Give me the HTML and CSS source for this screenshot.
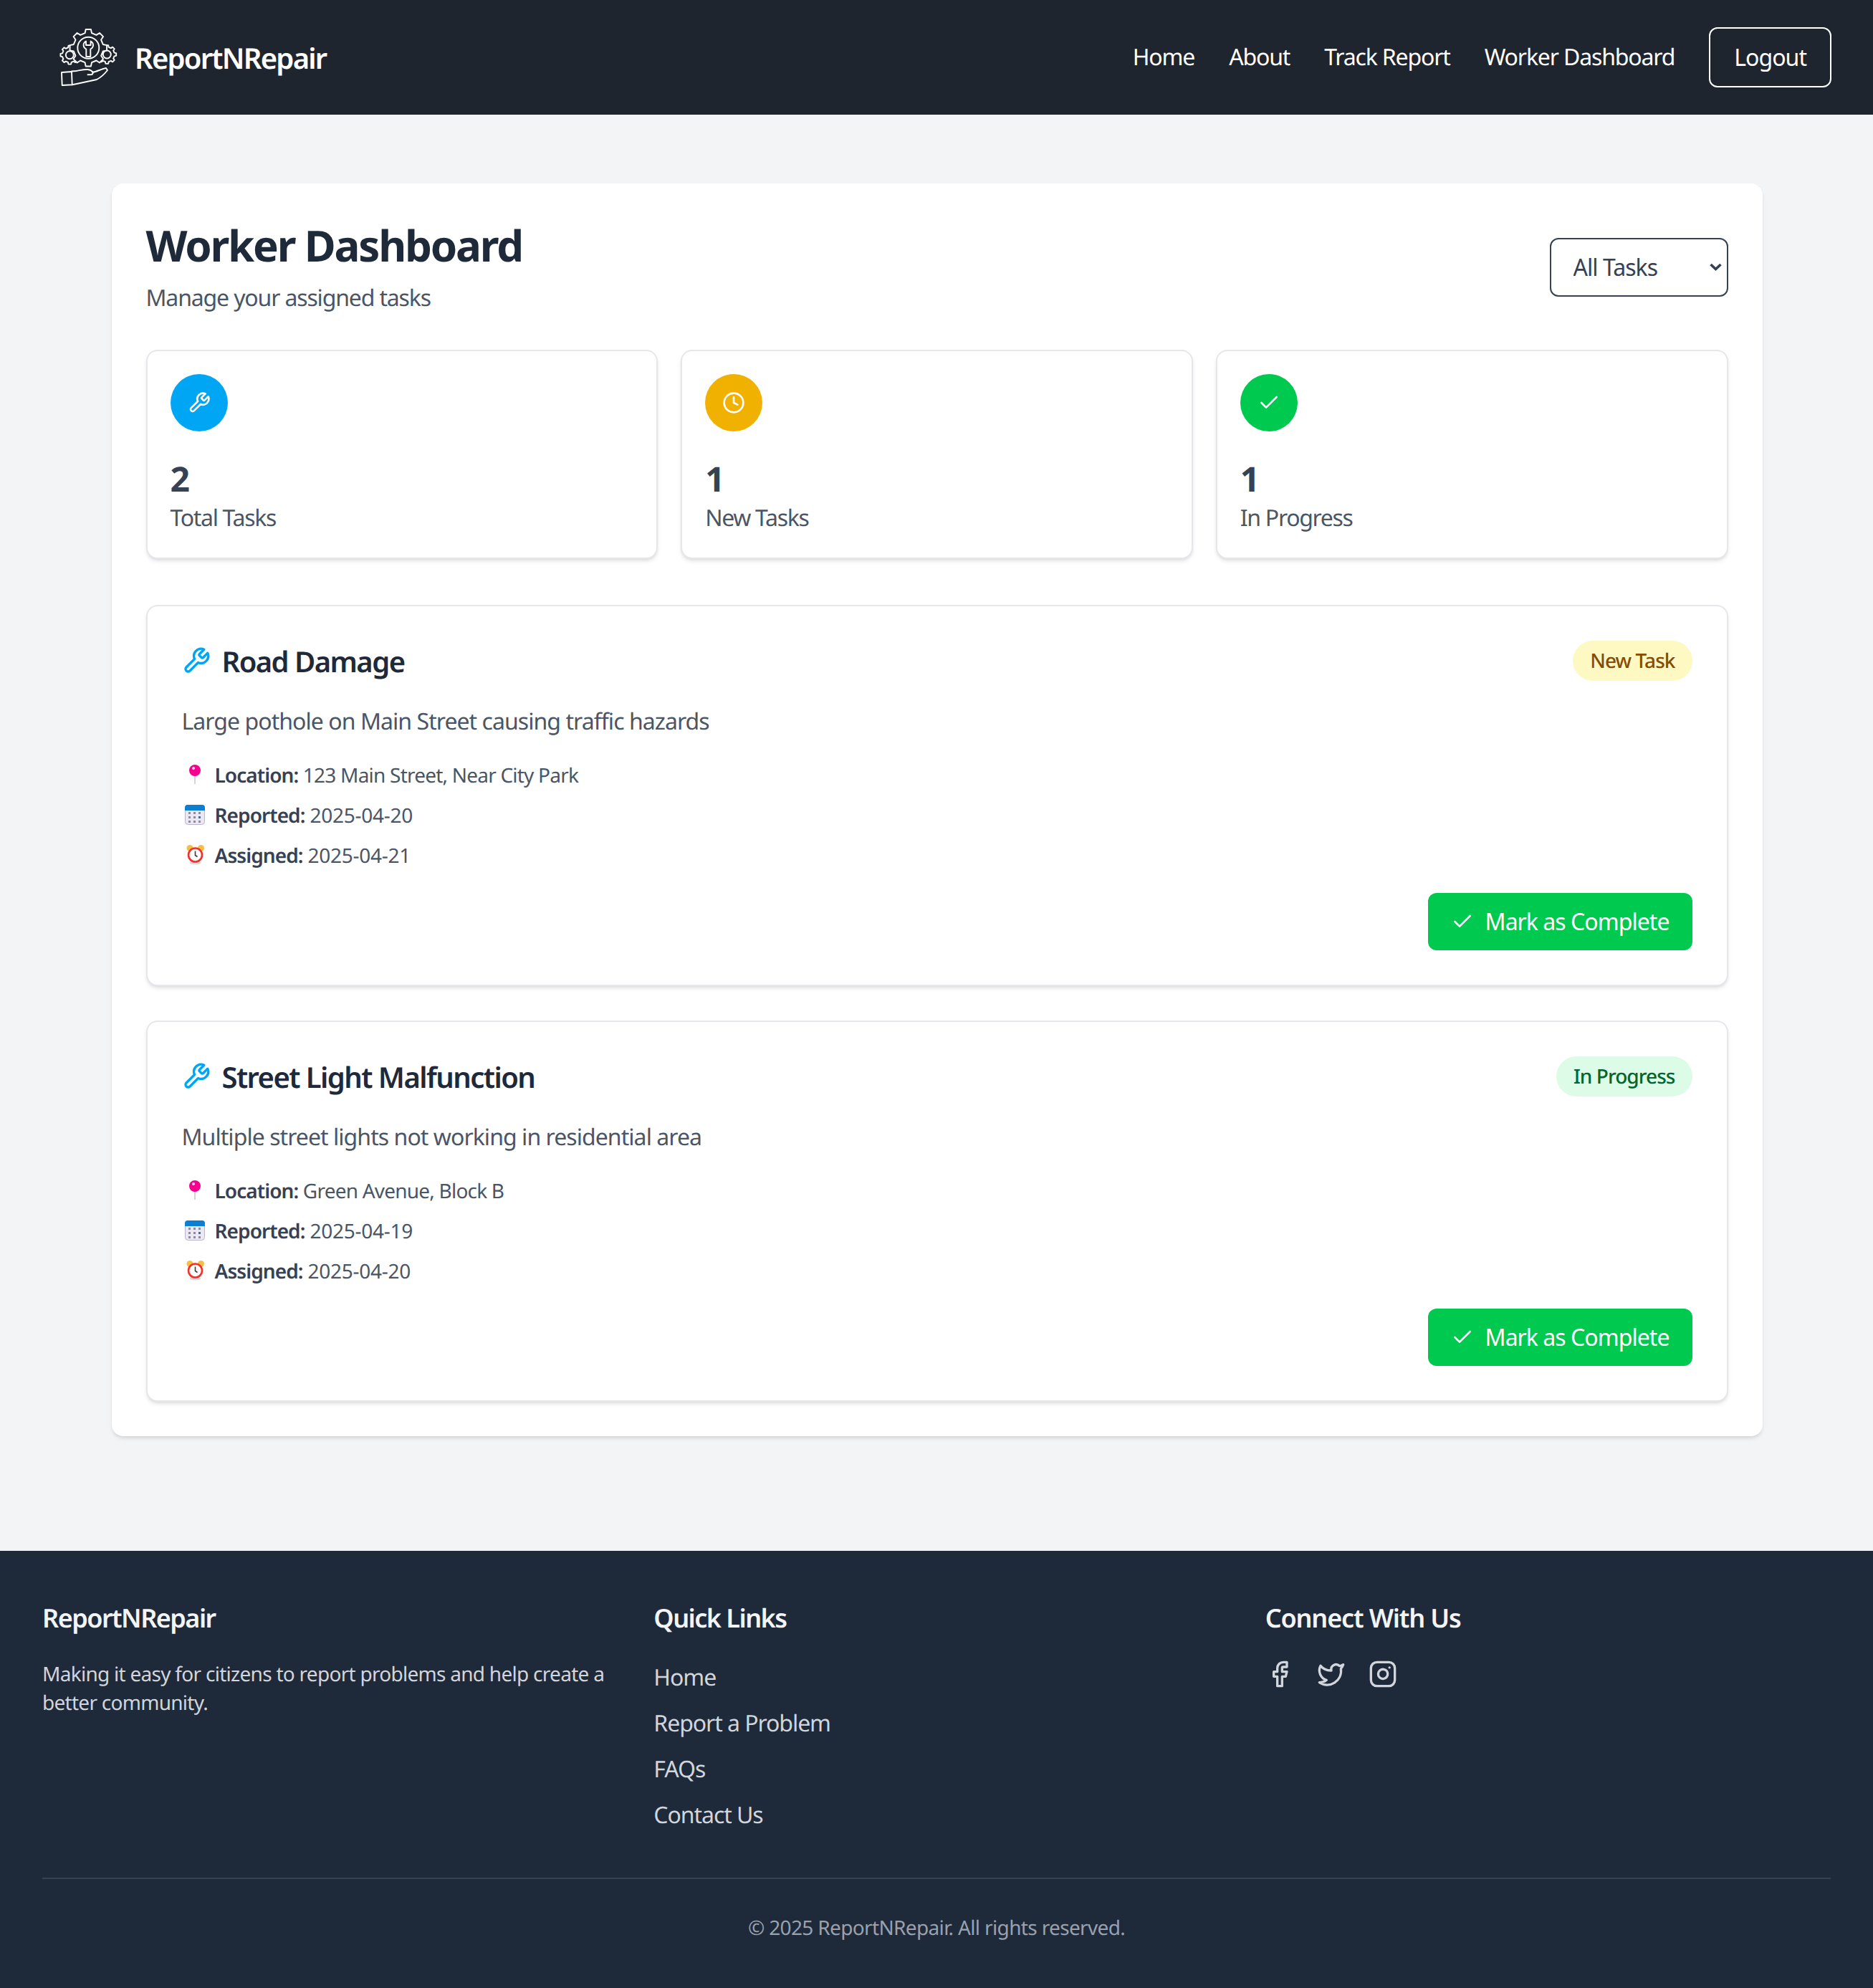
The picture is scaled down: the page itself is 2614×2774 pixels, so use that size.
FILE: index.html
```html
<!DOCTYPE html>
<html lang="en">
<head>
  <meta charset="UTF-8">
  <meta name="viewport" content="width=device-width, initial-scale=1.0">
  <title>ReportNRepair - Worker Dashboard</title>
  <link rel="stylesheet" href="styles.css">
</head>
<body>
  <!-- icon sprite -->
  <svg class="sprite" xmlns="http://www.w3.org/2000/svg">
    <symbol id="i-wrench" viewBox="0 0 24 24"><path d="M14.7 6.3a1 1 0 0 0 0 1.4l1.6 1.6a1 1 0 0 0 1.4 0l3.77-3.77a6 6 0 0 1-7.94 7.94l-6.91 6.91a2.12 2.12 0 0 1-3-3l6.91-6.91a6 6 0 0 1 7.94-7.94l-3.76 3.76z"/></symbol>
    <symbol id="i-clock" viewBox="0 0 24 24"><circle cx="12" cy="12" r="10"/><polyline points="12 6 12 12 16 14"/></symbol>
    <symbol id="i-check" viewBox="0 0 24 24"><polyline points="20 6 9 17 4 12"/></symbol>
    <symbol id="e-pin" viewBox="0 0 28 28">
      <rect x="13" y="14" width="2" height="13" fill="#d3d3d8" stroke="none"/>
      <circle cx="14" cy="8" r="8" fill="#f5008f" stroke="none"/>
      <circle cx="12" cy="5" r="2" fill="#ffd3ea" stroke="none"/>
    </symbol>
    <symbol id="e-calendar" viewBox="0 0 28 28">
      <rect x="0.5" y="0.5" width="27" height="27" rx="4" fill="#ebe8f3" stroke="#b9b5cd"/>
      <path d="M0 8V4a4 4 0 0 1 4-4h20a4 4 0 0 1 4 4v4z" fill="#0b7fd1" stroke="none"/>
      <g fill="#8e8aa1" stroke="none">
        <rect x="5" y="10" width="3" height="3"/><rect x="12" y="10" width="3" height="3"/><rect x="19" y="10" width="3" height="3"/>
        <rect x="5" y="16" width="3" height="3"/><rect x="12" y="16" width="3" height="3"/><rect x="19" y="16" width="3" height="3" fill="#0b7fd1"/>
        <rect x="5" y="22" width="3" height="3"/><rect x="12" y="22" width="3" height="3"/><rect x="19" y="22" width="3" height="3"/>
      </g>
    </symbol>
    <symbol id="e-alarm" viewBox="0 0 28 28">
      <ellipse cx="14.5" cy="25" rx="8" ry="2.5" fill="#d9d9dc" stroke="none"/>
      <circle cx="7" cy="4.5" r="4.5" fill="#f5bf45" stroke="none"/>
      <circle cx="22.5" cy="4.5" r="4.5" fill="#f5bf45" stroke="none"/>
      <circle cx="14.5" cy="14" r="9.5" fill="#fff" stroke="#f2312c" stroke-width="2.6"/>
      <path d="M14.5 8.5V14.5L17.5 16.5" fill="none" stroke="#3a3a40" stroke-width="1.6"/>
    </symbol>
    <polygon id="gear" points="20.46,-4.72 25.75,-3.62 25.75,3.62 20.46,4.72 17.8,11.13 20.77,15.65 15.65,20.77 11.13,17.8 4.72,20.46 3.62,25.75 -3.62,25.75 -4.72,20.46 -11.13,17.8 -15.65,20.77 -20.77,15.65 -17.8,11.13 -20.46,4.72 -25.75,3.62 -25.75,-3.62 -20.46,-4.72 -17.8,-11.13 -20.77,-15.65 -15.65,-20.77 -11.13,-17.8 -4.72,-20.46 -3.62,-25.75 3.62,-25.75 4.72,-20.46 11.13,-17.8 15.65,-20.77 20.77,-15.65 17.8,-11.13"/>
  </svg>

  <header class="navbar">
    <a class="brand" href="#">
      <svg class="brand-logo" viewBox="0 0 104 80" fill="#1f252e" stroke="#fff" stroke-width="1.9" stroke-linejoin="round" stroke-linecap="round">
        <use href="#gear" transform="translate(37.3 36.7) scale(.5)" stroke-width="3.8"/>
        <use href="#gear" transform="translate(89.3 36) scale(.5)" stroke-width="3.8"/>
        <circle cx="37.3" cy="36.7" r="5.5"/>
        <circle cx="89.3" cy="36" r="5.5"/>
        <use href="#gear" transform="translate(63.3 26.7)"/>
        <circle cx="63.3" cy="26.7" r="15"/>
        <path d="M60 17.5v5.5h6.6v-5.5c2.4 1.3 3.6 3.5 3.4 6-.2 2.4-1.6 4-3.7 5v10.5h-6v-10.5c-2.1-1-3.5-2.6-3.7-5-.2-2.5 1-4.7 3.4-6z"/>
        <path d="M26 61l14-1 .7 18.3-14 .7z"/>
        <path d="M40 59.5l6.5-.5c6-1 11-2.5 16-2 3 .3 6 2 7.5 4.5l-1.5 2.5-6 .2M69 61c6-1 13-5 19-6l2 3c-4 5-9 10-15 13-9 2-19 4-28 6l-6.3 1.3" fill="none"/>
      </svg>
      <span class="brand-name">ReportNRepair</span>
    </a>
    <nav class="nav-links">
      <a href="#">Home</a>
      <a href="#">About</a>
      <a href="#">Track Report</a>
      <a href="#">Worker Dashboard</a>
      <button class="logout-btn" type="button">Logout</button>
    </nav>
  </header>

  <main class="page">
    <div class="panel">
      <div class="panel-head">
        <div>
          <h1>Worker Dashboard</h1>
          <p class="subtitle">Manage your assigned tasks</p>
        </div>
        <div class="filter">
          <select class="filter-select">
            <option>All Tasks</option>
            <option>New Tasks</option>
            <option>In Progress</option>
          </select>
          <svg class="filter-arrow" viewBox="0 0 19 11"><polyline points="2.5 2 9.5 8.5 16.5 2"/></svg>
        </div>
      </div>

      <div class="stats">
        <div class="stat-card">
          <div class="stat-icon sky"><svg class="icon icon-32"><use href="#i-wrench"/></svg></div>
          <div class="stat-value">2</div>
          <div class="stat-label">Total Tasks</div>
        </div>
        <div class="stat-card">
          <div class="stat-icon amber"><svg class="icon icon-32"><use href="#i-clock"/></svg></div>
          <div class="stat-value">1</div>
          <div class="stat-label">New Tasks</div>
        </div>
        <div class="stat-card">
          <div class="stat-icon green"><svg class="icon icon-32"><use href="#i-check"/></svg></div>
          <div class="stat-value">1</div>
          <div class="stat-label">In Progress</div>
        </div>
      </div>

      <article class="task-card">
        <div class="task-top">
          <h2 class="task-title"><svg class="icon icon-40 sky-text"><use href="#i-wrench"/></svg><span class="task-name">Road Damage</span></h2>
          <span class="badge badge-new">New Task</span>
        </div>
        <p class="task-desc">Large pothole on Main Street causing traffic hazards</p>
        <ul class="task-meta">
          <li><svg class="emoji"><use href="#e-pin"/></svg><span><b>Location:</b> 123 Main Street, Near City Park</span></li>
          <li><svg class="emoji"><use href="#e-calendar"/></svg><span class="meta-date"><b>Reported:</b> 2025-04-20</span></li>
          <li><svg class="emoji"><use href="#e-alarm"/></svg><span class="meta-date"><b>Assigned:</b> 2025-04-21</span></li>
        </ul>
        <div class="task-actions">
          <button class="complete-btn" type="button"><svg class="icon icon-32"><use href="#i-check"/></svg>Mark as Complete</button>
        </div>
      </article>

      <article class="task-card">
        <div class="task-top">
          <h2 class="task-title"><svg class="icon icon-40 sky-text"><use href="#i-wrench"/></svg><span class="task-name">Street Light Malfunction</span></h2>
          <span class="badge badge-progress">In Progress</span>
        </div>
        <p class="task-desc">Multiple street lights not working in residential area</p>
        <ul class="task-meta">
          <li><svg class="emoji"><use href="#e-pin"/></svg><span><b>Location:</b> Green Avenue, Block B</span></li>
          <li><svg class="emoji"><use href="#e-calendar"/></svg><span class="meta-date"><b>Reported:</b> 2025-04-19</span></li>
          <li><svg class="emoji"><use href="#e-alarm"/></svg><span class="meta-date"><b>Assigned:</b> 2025-04-20</span></li>
        </ul>
        <div class="task-actions">
          <button class="complete-btn" type="button"><svg class="icon icon-32"><use href="#i-check"/></svg>Mark as Complete</button>
        </div>
      </article>
    </div>
  </main>

  <footer class="footer">
    <div class="footer-cols">
      <div>
        <h3>ReportNRepair</h3>
        <p class="footer-about">Making it easy for citizens to report problems and help create a better community.</p>
      </div>
      <div>
        <h3>Quick Links</h3>
        <ul class="footer-links">
          <li><a href="#">Home</a></li>
          <li><a href="#">Report a Problem</a></li>
          <li><a href="#">FAQs</a></li>
          <li><a href="#">Contact Us</a></li>
        </ul>
      </div>
      <div>
        <h3 class="connect-title">Connect With Us</h3>
        <div class="socials">
          <a href="#"><svg class="icon icon-40" viewBox="0 0 24 24"><path d="M18 2h-3a5 5 0 0 0-5 5v3H7v4h3v8h4v-8h3l1-4h-4V7a1 1 0 0 1 1-1h3z"/></svg></a>
          <a href="#"><svg class="icon icon-40" viewBox="0 0 24 24"><path d="M22 4s-.7 2.1-2 3.4c1.6 10-9.4 17.3-18 11.6 2.2.1 4.4-.6 6-2C3 15.5.5 9.6 3 5c2.2 2.6 5.6 4.1 9 4-.9-4.2 4-6.6 7-3.8 1.1 0 3-1.2 3-1.2z"/></svg></a>
          <a href="#"><svg class="icon icon-40" viewBox="0 0 24 24"><rect x="2" y="2" width="20" height="20" rx="5" ry="5"/><path d="M16 11.37A4 4 0 1 1 12.63 8 4 4 0 0 1 16 11.37z"/><line x1="17.5" y1="6.5" x2="17.51" y2="6.5"/></svg></a>
        </div>
      </div>
    </div>
    <p class="copyright">© 2025 ReportNRepair. All rights reserved.</p>
  </footer>
</body>
</html>
```

FILE: styles.css
```css
* {
  box-sizing: border-box;
}

body {
  margin: 0;
  background: #f3f4f6;
  color: #1e2939;
  font-family: "Noto Sans", "Open Sans", sans-serif;
  font-size: 32px;
  line-height: 48px;
  letter-spacing: -0.03em;
  text-rendering: geometricPrecision;
}

a {
  color: inherit;
  text-decoration: none;
}

h1, h2, h3, p, ul {
  margin: 0;
  padding: 0;
}

ul {
  list-style: none;
}

.sprite {
  display: none;
}

.icon {
  flex: none;
  fill: none;
  stroke: currentColor;
  stroke-width: 2;
  stroke-linecap: round;
  stroke-linejoin: round;
}

.icon-32 {
  width: 32px;
  height: 32px;
}

.icon-40 {
  width: 40px;
  height: 40px;
}

/* navbar */
.navbar {
  display: flex;
  justify-content: space-between;
  align-items: center;
  height: 160px;
  padding: 0 58px 0 60px;
  background: #1f252e;
  color: #fff;
}

.brand {
  display: flex;
  align-items: center;
  gap: 24px;
  font-size: 40px;
  font-weight: 600;
  letter-spacing: -0.0442em;
}

.brand-logo {
  width: 104px;
  height: 80px;
}

.brand-name {
  padding-top: 2px;
}

.nav-links {
  display: flex;
  align-items: center;
  gap: 48px;
  letter-spacing: -0.036em;
}

.logout-btn {
  height: 84px;
  padding: 0 33px;
  border: 2px solid #fff;
  border-radius: 12px;
  background: transparent;
  color: #fff;
  font: inherit;
  letter-spacing: -0.03em;
}

/* main panel */
.page {
  padding: 96px 0 0 1px;
}

.panel {
  width: 2304px;
  margin: 0 auto;
  padding: 48px;
  background: #fff;
  border-radius: 16px;
  box-shadow: 0 4px 6px -1px rgba(0, 0, 0, 0.1), 0 2px 4px -2px rgba(0, 0, 0, 0.1);
}

.panel-head {
  display: flex;
  justify-content: space-between;
  align-items: center;
  margin-bottom: 48px;
}

h1 {
  margin-bottom: 14px;
  padding-top: 2px;
  font-size: 60px;
  line-height: 72px;
  font-weight: 700;
  letter-spacing: -0.0365em;
}

.subtitle {
  color: #4a5565;
  letter-spacing: -0.036em;
}

.filter {
  position: relative;
  padding-top: 2px;
}

.filter-select {
  display: block;
  width: 249px;
  height: 82px;
  padding: 0 31px;
  border: 2px solid #364153;
  border-radius: 12px;
  background: #fff;
  color: #364153;
  font: inherit;
  letter-spacing: inherit;
  appearance: none;
}

.filter-arrow {
  position: absolute;
  top: 37px;
  right: 8px;
  width: 19px;
  height: 11px;
  fill: none;
  stroke: #364153;
  stroke-width: 3.6;
  pointer-events: none;
}

/* stat cards */
.stats {
  display: grid;
  grid-template-columns: repeat(3, 1fr);
  gap: 32px;
  margin-bottom: 64px;
}

.stat-card {
  padding: 32px;
  border: 2px solid #e5e7eb;
  border-radius: 16px;
  background: #fff;
  box-shadow: 0 4px 6px -1px rgba(0, 0, 0, 0.1), 0 2px 4px -2px rgba(0, 0, 0, 0.1);
}

.stat-icon {
  display: flex;
  justify-content: center;
  align-items: center;
  width: 80px;
  height: 80px;
  margin-bottom: 38px;
  border-radius: 50%;
  color: #fff;
}

.sky {
  background: #00a6f4;
}

.amber {
  background: #f0b100;
}

.green {
  background: #00c950;
}

.sky-text {
  color: #00a6f4;
}

.stat-value {
  color: #364153;
  font-size: 48px;
  line-height: 58px;
  font-weight: 700;
}

.stat-label {
  margin: 1px 0 -1px;
  color: #4a5565;
  letter-spacing: -0.041em;
}

/* task cards */
.task-card {
  margin-top: 48px;
  padding: 48px;
  border: 2px solid #e5e7eb;
  border-radius: 16px;
  background: #fff;
  box-shadow: 0 4px 6px -1px rgba(0, 0, 0, 0.1), 0 2px 4px -2px rgba(0, 0, 0, 0.1);
}

.stats + .task-card {
  margin-top: 0;
}

.task-top {
  display: flex;
  justify-content: space-between;
  align-items: center;
  margin-bottom: 32px;
}

.task-title {
  display: flex;
  align-items: center;
  gap: 16px;
  font-size: 40px;
  line-height: 56px;
  font-weight: 600;
  letter-spacing: -0.039em;
}

.task-name {
  padding-top: 2px;
  line-height: 54px;
}

.badge {
  height: 56px;
  padding: 0 24px;
  border-radius: 28px;
  font-size: 28px;
  line-height: 56px;
  font-weight: 500;
}

.badge-new {
  background: #fef9c2;
  color: #894b00;
}

.badge-progress {
  background: #dcfce7;
  color: #016630;
}

.task-desc {
  margin-bottom: 31px;
  padding-top: 1px;
  color: #4a5565;
  letter-spacing: -0.0295em;
}

.task-meta {
  display: flex;
  flex-direction: column;
  gap: 16px;
  color: #4a5565;
  font-size: 28px;
  line-height: 40px;
  letter-spacing: -0.028em;
}

.task-meta li {
  display: flex;
  align-items: center;
  gap: 14px;
  padding-left: 4px;
}

.task-meta b {
  color: #364153;
  font-weight: 600;
  letter-spacing: -0.033em;
}

.meta-date {
  letter-spacing: -0.01em;
}

.emoji {
  flex: none;
  width: 28px;
  height: 28px;
  margin-bottom: 2px;
}

.task-actions {
  display: flex;
  justify-content: flex-end;
  margin-top: 32px;
}

.complete-btn {
  display: flex;
  align-items: center;
  gap: 16px;
  height: 80px;
  padding: 0 32px;
  border: none;
  border-radius: 12px;
  background: #00c950;
  color: #fff;
  font: inherit;
  letter-spacing: inherit;
}

/* footer */
.footer {
  margin-top: 160px;
  padding: 64px 59px;
  background: #1e2939;
  color: #d1d5dc;
}

.footer-cols {
  display: grid;
  grid-template-columns: repeat(3, 1fr);
  gap: 64px;
  padding-bottom: 64px;
  border-bottom: 2px solid #364153;
}

.footer h3 {
  margin-bottom: 30px;
  padding-top: 2px;
  color: #f3f4f6;
  font-size: 36px;
  line-height: 56px;
  font-weight: 600;
  letter-spacing: -0.042em;
}

.footer .connect-title {
  letter-spacing: -0.032em;
}

.footer-about {
  font-size: 28px;
  line-height: 40px;
  letter-spacing: -0.0257em;
}

.footer-links {
  display: flex;
  flex-direction: column;
  gap: 16px;
  margin-bottom: -1px;
  padding-top: 1px;
  letter-spacing: -0.033em;
}

.socials {
  display: flex;
  gap: 32px;
}

.socials a {
  display: flex;
}

.copyright {
  padding-top: 48px;
  color: #99a1af;
  font-size: 28px;
  line-height: 40px;
  text-align: center;
  letter-spacing: -0.0232em;
}
```
